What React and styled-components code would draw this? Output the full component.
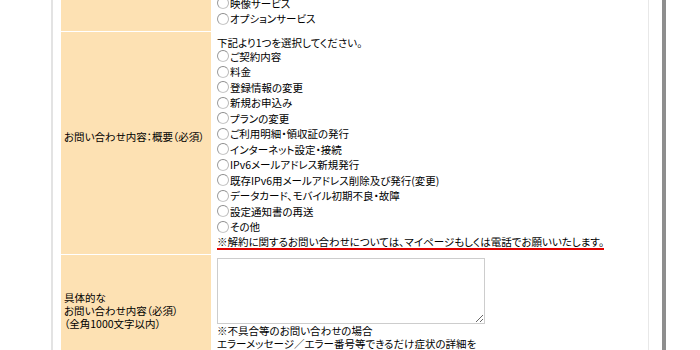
import React from 'react';
import styled, { createGlobalStyle } from 'styled-components';

const GlobalStyle = createGlobalStyle`
  html, body {
    margin: 0;
    padding: 0;
    background: #fff;
    overflow: hidden;
  }
  body {
    font-family: "Noto Sans CJK JP", "Noto Sans", sans-serif;
    font-size: 10.5px;
    color: #000;
    font-feature-settings: "palt";
  }
`;

const services = [
  'ひかり電話サービス',
  'インターネットサービス',
  'メールサービス',
  '映像サービス',
  'オプションサービス',
];

const topics = [
  'ご契約内容',
  '料金',
  '登録情報の変更',
  '新規お申込み',
  'プランの変更',
  'ご利用明細・領収証の発行',
  'インターネット設定・接続',
  'IPv6メールアドレス新規発行',
  '既存IPv6用メールアドレス削除及び発行(変更)',
  'データカード、モバイル初期不良・故障',
  '設定通知書の再送',
  'その他',
];

const Page = styled.div`
  display: flex;
  min-height: 350px;
`;

const Frame = styled.div`
  margin-left: 51px;
  width: 595px;
  border-left: 2px solid #e3e3e3;
  border-right: 1px solid #e8e8e8;
`;

const Shade = styled.div`
  margin-left: 13px;
  width: 4px;
  background: #8e8e8e;
`;

const FormTable = styled.table`
  margin: -56px 0 0 7px;
  width: 580px;
  border-collapse: separate;
  border-spacing: 1px;
  background: #fff;
`;

const Label = styled.th`
  width: 150px;
  box-sizing: border-box;
  padding: 0 2px ${(p) => p.$lift || 0}px 3px;
  background: #fde1b3;
  font-weight: normal;
  text-align: left;
  vertical-align: middle;
  line-height: 13.3px;
  white-space: nowrap;
`;

const Field = styled.td`
  padding: ${(p) => p.$top || 4}px 5px 4px 5px;
  background: #fff;
  vertical-align: top;
  line-height: 13px;
`;

const Option = styled.label`
  display: flex;
  align-items: center;
  height: 15.5px;
  white-space: nowrap;
`;

const Radio = styled.input.attrs({ type: 'radio' })`
  appearance: none;
  box-sizing: border-box;
  width: 12px;
  height: 12px;
  margin: 0 1px 0 0;
  border: 1px solid #9a9a9a;
  border-color: #8c8c8c #b8b8b8 #c8c8c8 #9c9c9c;
  border-radius: 50%;
  background: #fff;
`;

const Line = styled.div`
  white-space: nowrap;
`;

const Notice = styled.span`
  display: inline-block;
  line-height: 13px;
  border-bottom: 2px solid #e00000;
  white-space: nowrap;
`;

const Detail = styled.textarea`
  display: block;
  box-sizing: border-box;
  width: 268px;
  height: 66px;
  margin: 0;
  border: 1px solid #cdcdcd;
  font: inherit;
`;

const RadioGroup = ({ name, items }) => (
  <>
    {items.map((item) => (
      <Option key={item}>
        <Radio name={name} value={item} />
        {item}
      </Option>
    ))}
  </>
);

const App = () => {
  return (
    <Page>
      <GlobalStyle />
      <Frame>
        <FormTable>
          <tbody>
            <tr>
              <Label>お問い合わせサービス（必須）</Label>
              <Field>
                <RadioGroup name="service" items={services} />
              </Field>
            </tr>
            <tr>
              <Label $lift={11}>お問い合わせ内容：概要（必須）</Label>
              <Field>
                <Line>下記より1つを選択してください。</Line>
                <RadioGroup name="topic" items={topics} />
                <Notice>※解約に関するお問い合わせについては、マイページもしくは電話でお願いいたします。</Notice>
              </Field>
            </tr>
            <tr>
              <Label>
                具体的な
                <br />
                お問い合わせ内容（必須）
                <br />
                （全角1000文字以内）
              </Label>
              <Field $top={3}>
                <Detail name="detail" />
                <Line>※不具合等のお問い合わせの場合</Line>
                <Line>エラーメッセージ／エラー番号等できるだけ症状の詳細を</Line>
                <Line>ご記入ください。</Line>
              </Field>
            </tr>
          </tbody>
        </FormTable>
      </Frame>
      <Shade />
    </Page>
  );
};

export default App;
